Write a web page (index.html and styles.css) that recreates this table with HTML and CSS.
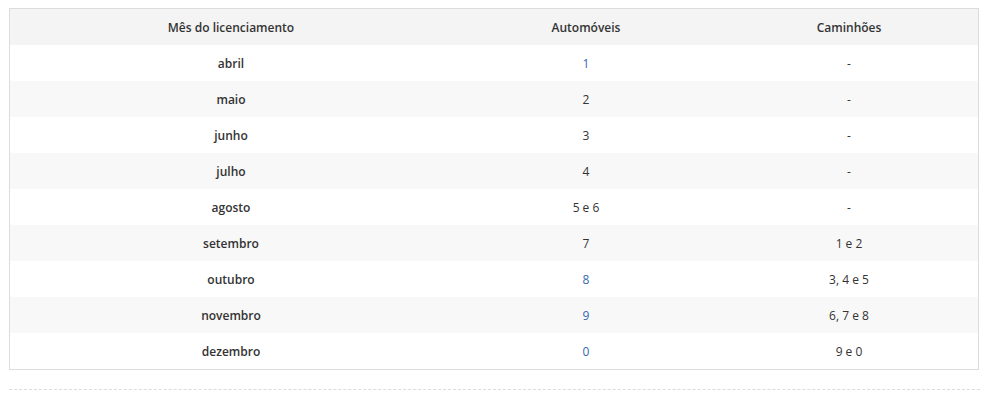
FILE: index.html
```html
<!DOCTYPE html>
<html lang="pt-BR">
<head>
<meta charset="utf-8">
<link rel="stylesheet" href="styles.css">
</head>
<body>
<div class="wrap">
  <table class="lic">
    <colgroup><col class="c1"><col class="c2"><col class="c3"></colgroup>
    <thead>
      <tr><th>Mês do licenciamento</th><th>Automóveis</th><th>Caminhões</th></tr>
    </thead>
    <tbody>
      <tr><td class="m">abril</td><td><a href="#">1</a></td><td>-</td></tr>
      <tr><td class="m">maio</td><td>2</td><td>-</td></tr>
      <tr><td class="m">junho</td><td>3</td><td>-</td></tr>
      <tr><td class="m">julho</td><td>4</td><td>-</td></tr>
      <tr><td class="m">agosto</td><td>5 e 6</td><td>-</td></tr>
      <tr><td class="m">setembro</td><td>7</td><td>1 e 2</td></tr>
      <tr><td class="m">outubro</td><td><a href="#">8</a></td><td>3, 4 e 5</td></tr>
      <tr><td class="m">novembro</td><td><a href="#">9</a></td><td>6, 7 e 8</td></tr>
      <tr><td class="m">dezembro</td><td><a href="#">0</a></td><td>9 e 0</td></tr>
    </tbody>
  </table>
  <div class="sep"></div>
</div>
</body>
</html>
```
FILE: styles.css
```css
html, body {
  margin: 0;
  padding: 0;
  background: #fff;
}
body {
  font-family: "Open Sans", "Liberation Sans", sans-serif;
  font-size: 12px;
  color: #333;
}
.wrap {
  padding: 8px 0 0 9px;
  width: 970px;
}
.lic {
  width: 970px;
  border-collapse: separate;
  border-spacing: 0;
  border: 1px solid #dcdcdc;
  table-layout: fixed;
}
.c1 { width: 442px; }
.c2 { width: 268px; }
.c3 { width: 258px; }
.lic th, .lic td {
  height: 36px;
  box-sizing: border-box;
  padding: 1px 0 0;
  text-align: center;
  vertical-align: middle;
  line-height: 16px;
}
.lic th {
  font-weight: 600;
  background: #f4f4f4;
  color: #333;
}
.lic td.m {
  font-weight: 600;
}
.lic tbody tr:nth-child(odd) td { background: #fff; }
.lic tbody tr:nth-child(even) td { background: #f8f8f8; }
.lic a {
  color: #3568b0;
  text-decoration: none;
}
.sep {
  margin-top: 19px;
  width: 971px;
  border-top: 1px dashed #dcdcdc;
}
```
